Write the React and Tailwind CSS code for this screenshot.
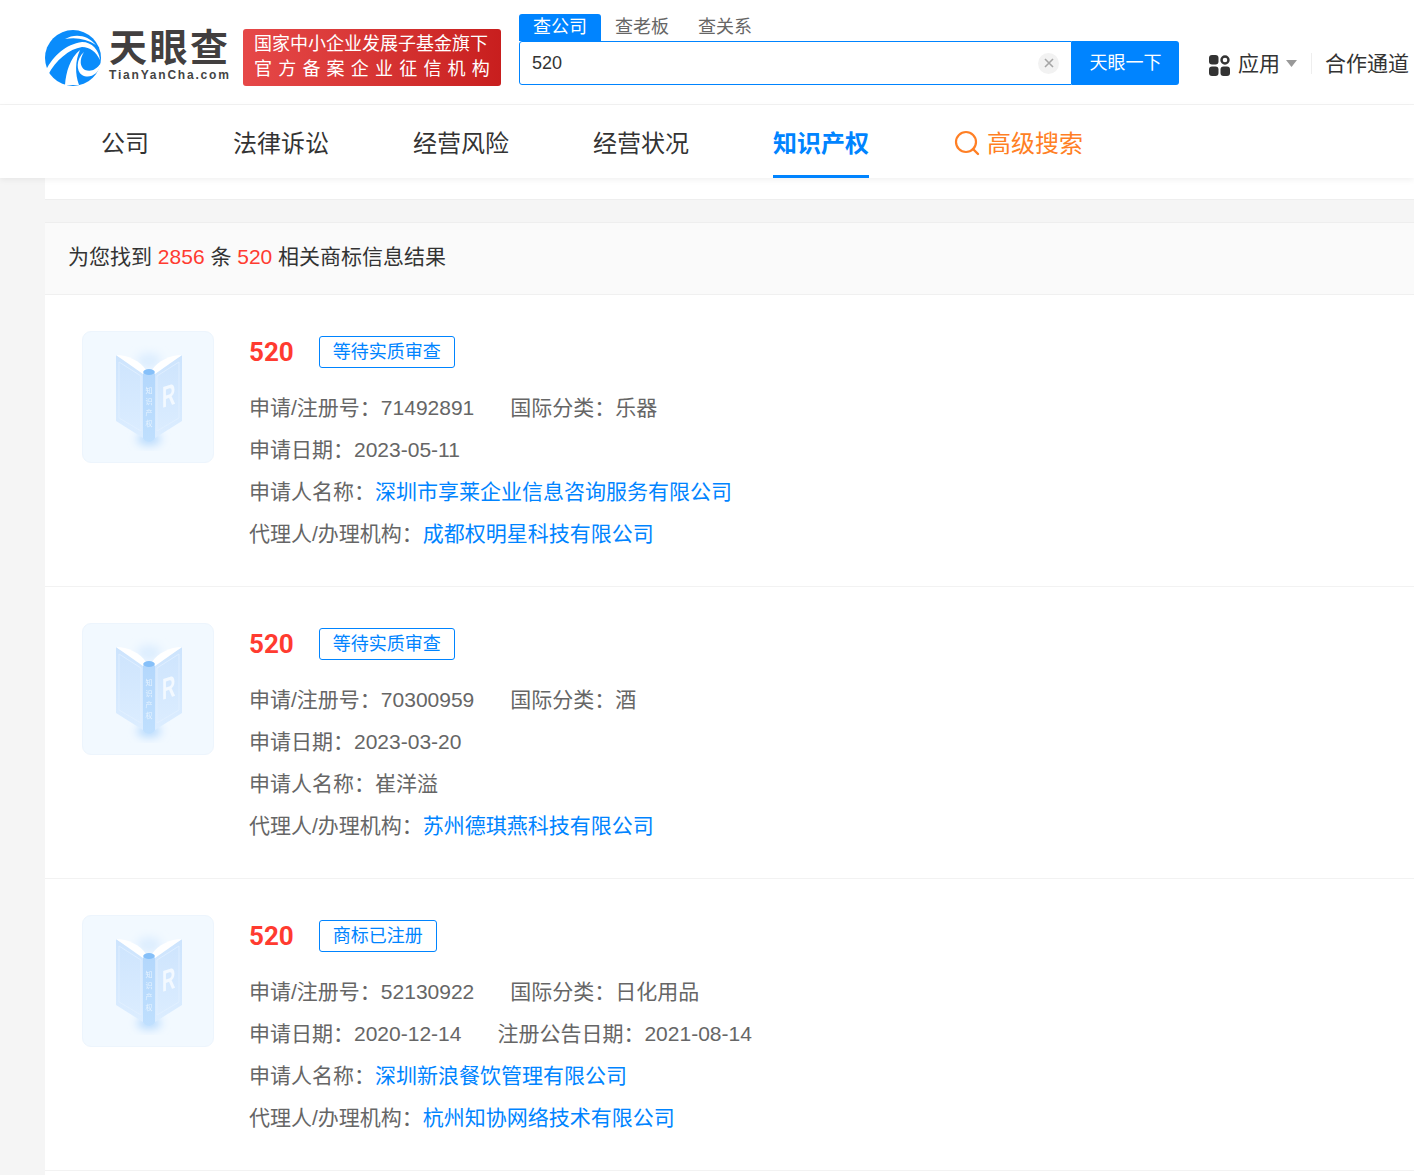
import React from "react";

const nav = ["公司", "法律诉讼", "经营风险", "经营状况"];

const items = [
  {
    status: "等待实质审查",
    rows: [
      [{ label: "申请/注册号：", value: "71492891" }, { label: "国际分类：", value: "乐器" }],
      [{ label: "申请日期：", value: "2023-05-11" }],
      [{ label: "申请人名称：", value: "深圳市享莱企业信息咨询服务有限公司", link: true }],
      [{ label: "代理人/办理机构：", value: "成都权明星科技有限公司", link: true }],
    ],
  },
  {
    status: "等待实质审查",
    rows: [
      [{ label: "申请/注册号：", value: "70300959" }, { label: "国际分类：", value: "酒" }],
      [{ label: "申请日期：", value: "2023-03-20" }],
      [{ label: "申请人名称：", value: "崔洋溢" }],
      [{ label: "代理人/办理机构：", value: "苏州德琪燕科技有限公司", link: true }],
    ],
  },
  {
    status: "商标已注册",
    rows: [
      [{ label: "申请/注册号：", value: "52130922" }, { label: "国际分类：", value: "日化用品" }],
      [{ label: "申请日期：", value: "2020-12-14" }, { label: "注册公告日期：", value: "2021-08-14" }],
      [{ label: "申请人名称：", value: "深圳新浪餐饮管理有限公司", link: true }],
      [{ label: "代理人/办理机构：", value: "杭州知协网络技术有限公司", link: true }],
    ],
  },
];

function LogoMark() {
  return (
    <svg width="56" height="56" viewBox="0 0 56 56" className="shrink-0">
      <circle cx="28" cy="28" r="28" fill="#0a8cfb" />
      <path d="M20 9C30 3 43 5 51 15C42 9 31 7 20 9Z" fill="#fff" />
      <path d="M1 40C8 26 21 14 37 12C47 12 54 20 55 30C51 22 45 17 37 17C24 19 11 30 3 45Z" fill="#fff" />
      <path d="M20 55C21 42 25 28 35 20C30 31 30 44 34 55Z" fill="#fff" />
      <path d="M39 22C34 30 35 37 40 40C46 42 51 40 56 33C54 45 44 49 37 45C31 41 31 29 39 22Z" fill="#fff" />
    </svg>
  );
}

function Logo() {
  return (
    <div className="flex items-center gap-[8px]">
      <LogoMark />
      <div className="flex flex-col w-[122px] -mt-[9px]">
        <span className="text-[38px] leading-[38px] font-bold text-[#423f3f] whitespace-nowrap tracking-[2.5px] [font-family:'Noto_Sans_CJK_SC',sans-serif]">
          天眼查
        </span>
        <span className="mt-[4px] text-[12px] leading-[14px] font-bold text-[#444] tracking-[1.8px] whitespace-nowrap [font-family:'Liberation_Sans',sans-serif]">
          TianYanCha.com
        </span>
      </div>
    </div>
  );
}

function BookIcon() {
  return (
    <div className="w-[132px] h-[132px] shrink-0 rounded-[9px] bg-[#f2f9ff] border border-[#edf5fd] overflow-hidden">
      <svg width="130" height="130" viewBox="1 1 130 130">
        <defs>
          <linearGradient id="cover" x1="0" y1="0" x2="0" y2="1">
            <stop offset="0" stopColor="#cde4fd" />
            <stop offset="1" stopColor="#dcedff" />
          </linearGradient>
          <linearGradient id="spine" x1="0" y1="0" x2="0" y2="1">
            <stop offset="0" stopColor="#b3d7fc" />
            <stop offset="1" stopColor="#bfdffe" />
          </linearGradient>
          <filter id="glow" x="-50%" y="-50%" width="200%" height="200%">
            <feGaussianBlur stdDeviation="5" />
          </filter>
          <filter id="soft">
            <feGaussianBlur stdDeviation="0.35" />
          </filter>
        </defs>
        <ellipse cx="67" cy="30" rx="12" ry="8" fill="#dcedfe" filter="url(#glow)" />
        <ellipse cx="67" cy="108" rx="12" ry="6" fill="#b4d8fd" filter="url(#glow)" />
        <g filter="url(#soft)">
          <path d="M34 24L61 41V107L34 90Z" fill="url(#cover)" />
          <path d="M100 24L73 41V107L100 90Z" fill="url(#cover)" />
          <path d="M37 31L59 45V100L37 87Z" fill="none" stroke="#e2f0ff" strokeWidth="0.8" />
          <path d="M97 31L75 45V100L97 87Z" fill="none" stroke="#e2f0ff" strokeWidth="0.8" />
          <path d="M34 24C46 24 58 30 64 39L61 43Z" fill="#fff" />
          <path d="M100 24C88 24 76 30 70 39L73 43Z" fill="#fff" />
          <path d="M61 43C64 39 70 39 73 43V107C70 112 64 112 61 107Z" fill="url(#spine)" />
          <ellipse cx="67" cy="41" rx="5.8" ry="3" fill="#86c0f9" />
          <text x="67" y="62" textAnchor="middle" fontSize="7" fill="#e6f3ff" fontFamily="'Noto Sans CJK SC', sans-serif">知</text>
          <text x="67" y="73" textAnchor="middle" fontSize="7" fill="#e6f3ff" fontFamily="'Noto Sans CJK SC', sans-serif">识</text>
          <text x="67" y="84" textAnchor="middle" fontSize="7" fill="#e6f3ff" fontFamily="'Noto Sans CJK SC', sans-serif">产</text>
          <text x="67" y="95" textAnchor="middle" fontSize="7" fill="#e6f3ff" fontFamily="'Noto Sans CJK SC', sans-serif">权</text>
          <text fontSize="30" fontWeight="700" fill="#f3f9ff" transform="translate(80 77) skewY(-18) scale(0.62 1)" fontFamily="'Liberation Sans', sans-serif">R</text>
        </g>
      </svg>
    </div>
  );
}

function ResultItem({ item }) {
  return (
    <div className="h-[292px] border-b border-[#f2f2f2] pl-[37px] pt-[36px] flex gap-[35px]">
      <BookIcon />
      <div className="flex flex-col">
        <div className="flex items-center h-[41px] gap-[25px]">
          <span className="text-[26px] leading-none font-bold text-[#ff3b30] [font-family:'Roboto',sans-serif]">520</span>
          <span className="h-[32px] px-[13px] pt-[1px] flex items-center border border-[#0084ff] rounded-[3px] text-[18px] text-[#0084ff]">
            {item.status}
          </span>
        </div>
        <div className="flex flex-col mt-[15px]">
          {item.rows.map((row, i) => (
            <div key={i} className="h-[42px] flex items-center gap-[36px] text-[21px] text-[#666] whitespace-nowrap">
              {row.map((cell) => (
                <span key={cell.label}>
                  {cell.label}
                  <span className={cell.link ? "text-[#0084ff]" : ""}>{cell.value}</span>
                </span>
              ))}
            </div>
          ))}
        </div>
      </div>
    </div>
  );
}

export default function App() {
  return (
    <div className="w-[1414px] h-[1175px] overflow-hidden bg-[#f5f5f5] flex flex-col [font-family:'Liberation_Sans','Noto_Sans_CJK_SC',sans-serif]">
      <header className="h-[105px] shrink-0 bg-white border-b border-[#f3f3f3] flex pl-[45px] overflow-hidden">
        <div className="pt-[30px]">
          <Logo />
        </div>
        <div className="ml-[12px] mt-[29px] w-[258px] h-[57px] rounded-[3px] bg-gradient-to-r from-[#e64848] to-[#c81e1e] text-white text-[18px] pl-[11px] pt-[3px] leading-[25px] whitespace-nowrap">
          <div>国家中小企业发展子基金旗下</div>
          <div className="tracking-[6.2px]">官方备案企业征信机构</div>
        </div>

        <div className="ml-[18px] mt-[14px] w-[660px] shrink-0">
          <div className="flex h-[27px] text-[18px] leading-[26px]">
            <div className="w-[82px] rounded-t-[3px] bg-[#0084ff] text-white text-center">查公司</div>
            <div className="ml-[14px] text-[#666]">查老板</div>
            <div className="ml-[29px] text-[#666]">查关系</div>
          </div>
          <div className="flex h-[44px]">
            <div className="flex-1 border border-[#0084ff] rounded-l-[3px] flex items-center pl-[12px] pr-[12px] text-[18px] text-[#333]">
              <span className="flex-1">520</span>
              <span className="w-[21px] h-[21px] rounded-full bg-[#f2f2f2] flex items-center justify-center">
                <svg width="10" height="10" viewBox="0 0 10 10">
                  <path d="M1 1L9 9M9 1L1 9" stroke="#a6a6a6" strokeWidth="1.6" />
                </svg>
              </span>
            </div>
            <div className="w-[107px] bg-[#0084ff] rounded-r-[3px] text-white text-[18px] flex items-center justify-center">
              天眼一下
            </div>
          </div>
        </div>

        <div className="ml-[30px] mt-[41px] h-[45px] flex items-center shrink-0 whitespace-nowrap text-[21px] text-[#333]">
          <svg width="21" height="21" viewBox="0 0 21 21" className="mt-[3px]">
            <rect x="0" y="0" width="9.5" height="9.5" rx="3" fill="#333" />
            <circle cx="16" cy="5" r="3.5" fill="none" stroke="#333" strokeWidth="2.4" />
            <rect x="0" y="11.5" width="9.5" height="9.5" rx="3" fill="#333" />
            <rect x="11.5" y="11.5" width="9.5" height="9.5" rx="3" fill="#333" />
          </svg>
          <span className="ml-[8px] mt-[1px]">应用</span>
          <svg width="11" height="7" viewBox="0 0 11 7" className="ml-[6px]">
            <path d="M0 0H11L5.5 7Z" fill="#999" />
          </svg>
          <span className="ml-[14px] w-[1px] h-[21px] bg-[#eee]" />
          <span className="ml-[13px]">合作通道</span>
        </div>
      </header>

      <nav className="h-[73px] shrink-0 bg-white shadow-[0_2px_6px_rgba(0,0,0,0.06)] flex pl-[101px] gap-[84px] text-[24px] text-[#333] relative z-10">
        {nav.map((n) => (
          <div key={n} className="pt-[21px] leading-[36px]">{n}</div>
        ))}
        <div className="pt-[21px] leading-[36px] h-[73px] font-bold text-[#0084ff] border-b-[3px] border-[#0084ff]">知识产权</div>
        <div className="pt-[21px] leading-[36px] text-[#ff7f24] flex items-start gap-[7px] ml-[1px]">
          <svg width="26" height="26" viewBox="0 0 26 26" className="mt-[4px] shrink-0">
            <circle cx="12" cy="12" r="10" fill="none" stroke="#ff7f24" strokeWidth="2.2" />
            <path d="M19 19L24 24" stroke="#ff7f24" strokeWidth="2.4" strokeLinecap="round" />
          </svg>
          高级搜索
        </div>
      </nav>

      <main className="pl-[45px] flex-1 min-h-0">
        <div className="h-[22px] bg-white border-b border-[#eeeeee]" />
        <div className="mt-[22px] bg-white border-t border-[#eeeeee]">
          <div className="h-[72px] bg-[#fafafa] border-b border-[#f0f0f0] pl-[23px] pb-[3px] flex items-center text-[21px] text-[#333] whitespace-pre">
            <span>为您找到 </span>
            <span className="text-[#ff3b30]">2856</span>
            <span> 条 </span>
            <span className="text-[#ff3b30]">520</span>
            <span> 相关商标信息结果</span>
          </div>
          {items.map((item, i) => (
            <ResultItem key={i} item={item} />
          ))}
          <div className="h-[40px]" />
        </div>
      </main>
    </div>
  );
}
